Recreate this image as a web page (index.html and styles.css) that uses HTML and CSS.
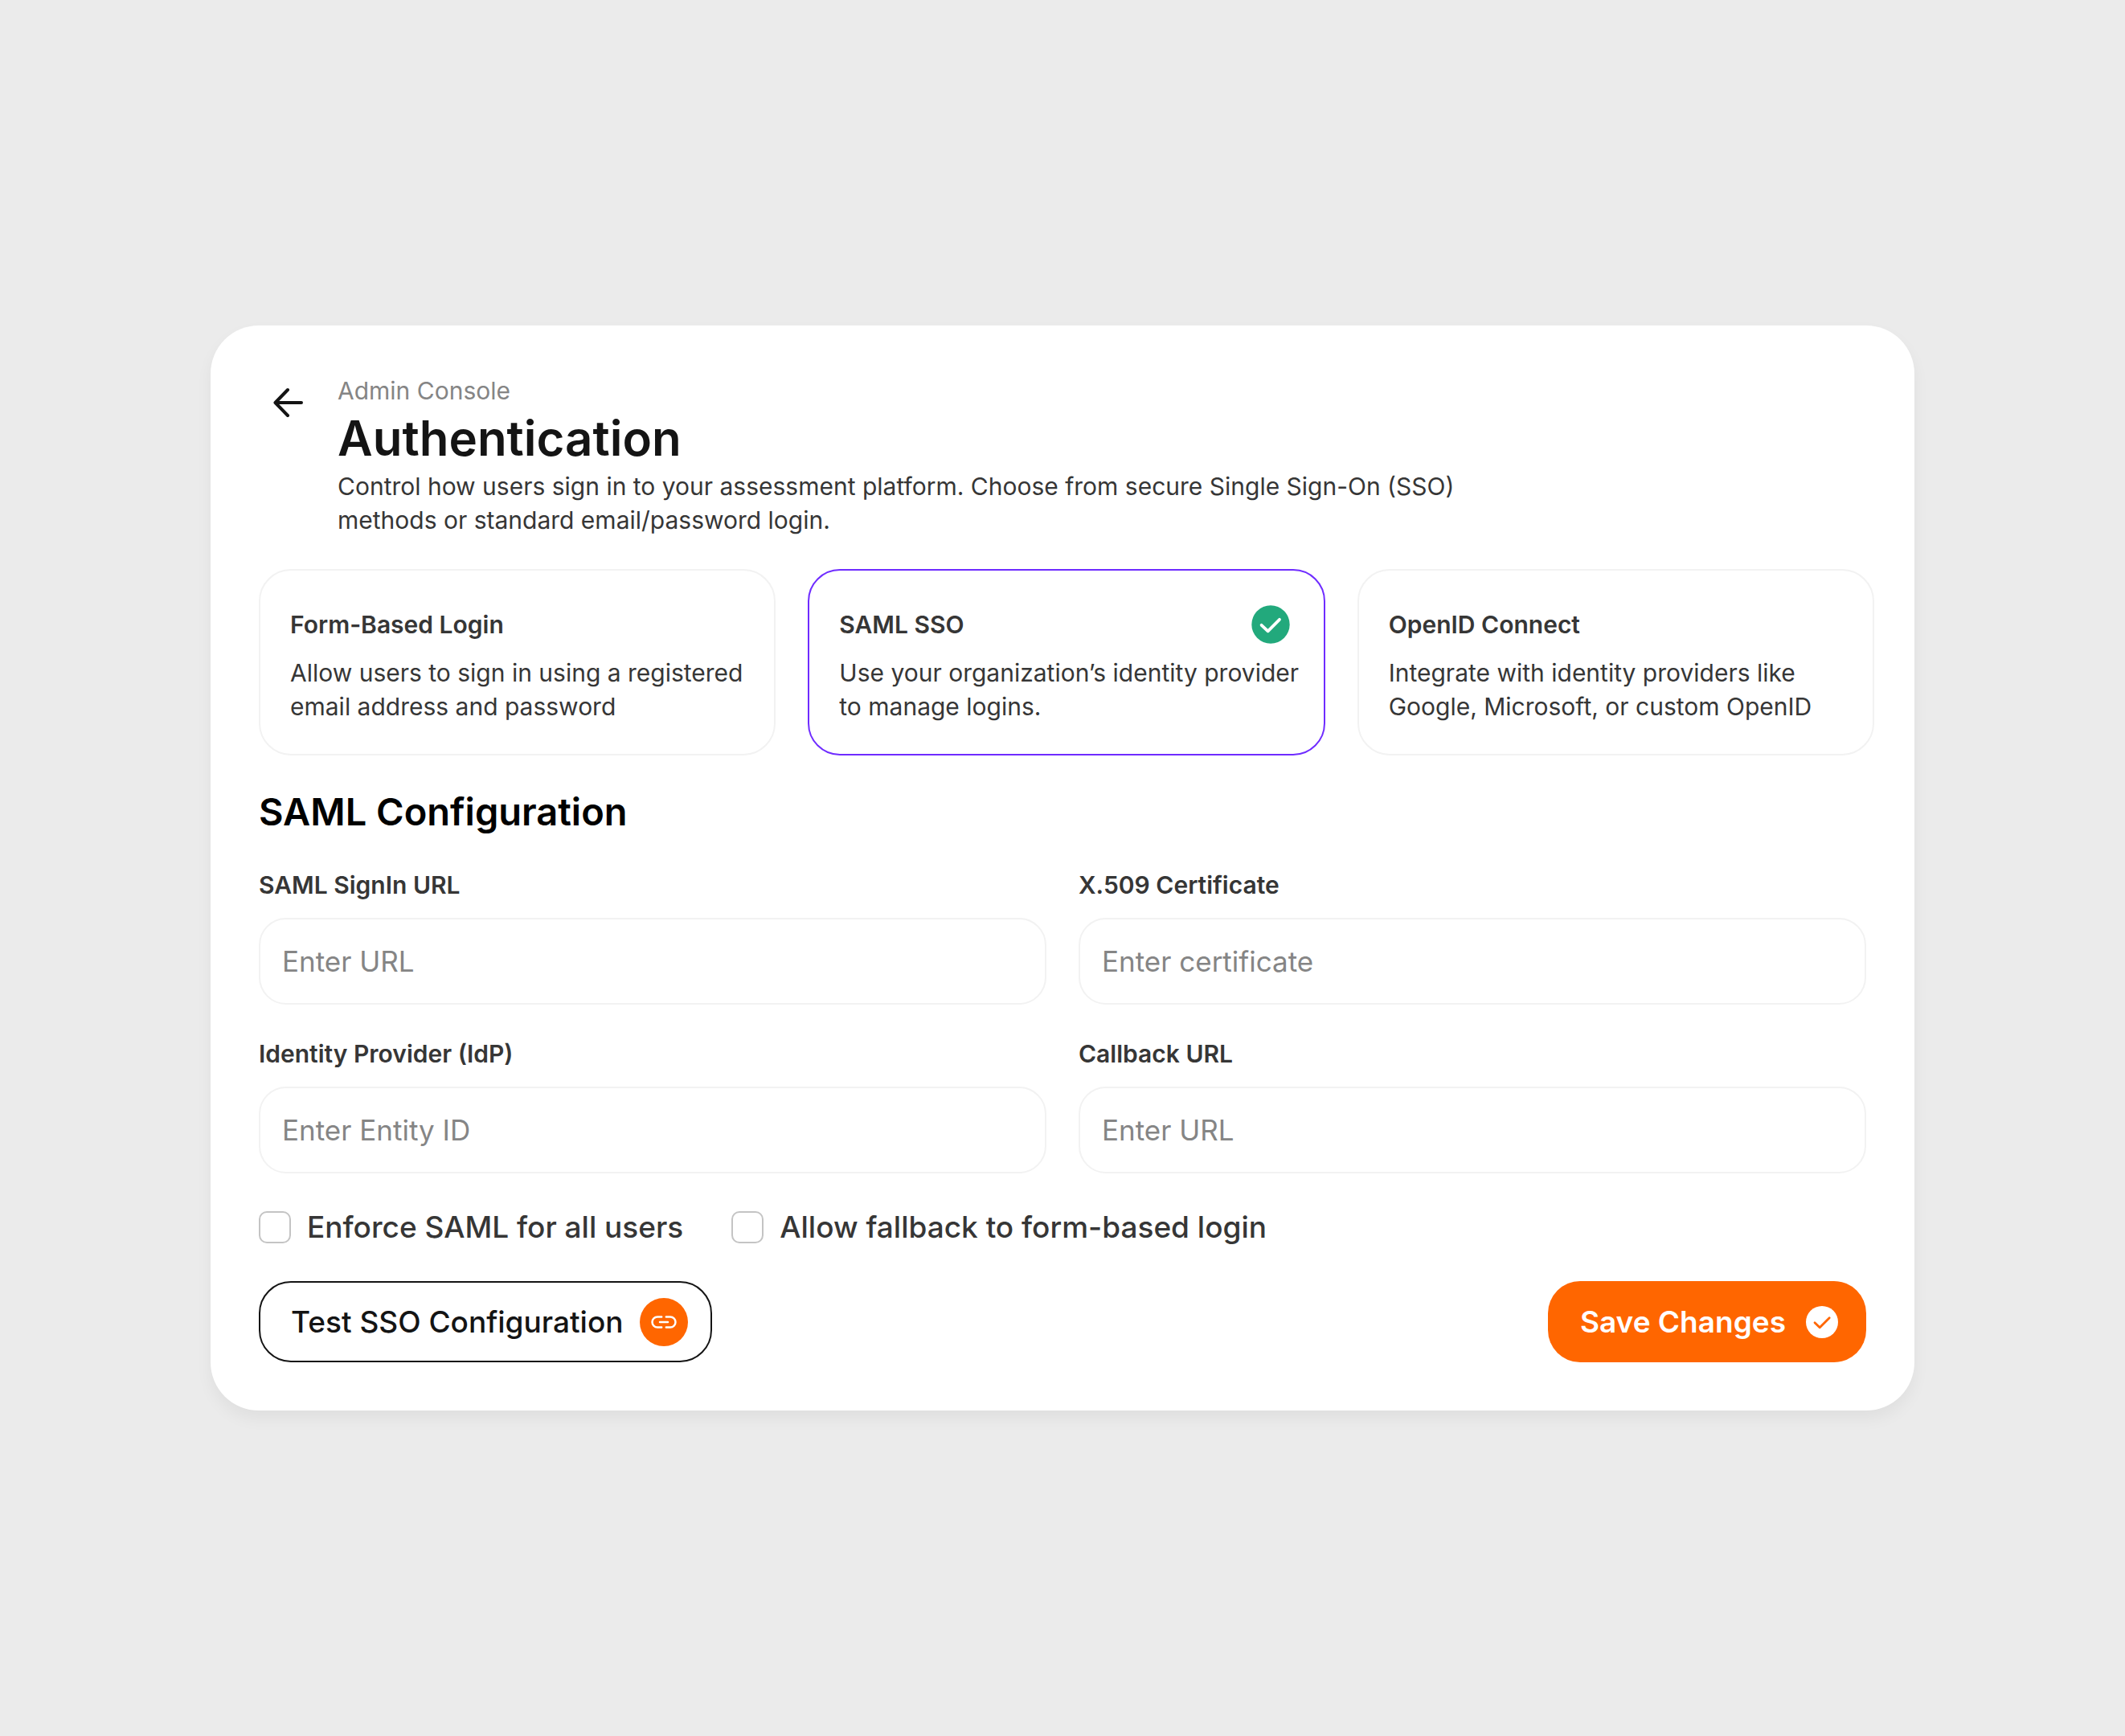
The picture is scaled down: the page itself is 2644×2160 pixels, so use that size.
FILE: index.html
```
<!DOCTYPE html>
<html lang="en">
<head>
    <meta charset="UTF-8">
    <meta name="viewport" content="width=device-width, initial-scale=1.0">
    <title>Authentication</title>
    <link rel="stylesheet" href="styles.css">
</head>
<body>
    <main class="panel">
        <header class="page-header">
            <button type="button" class="back-btn" aria-label="Back">
                <svg width="48" height="48" viewBox="0 0 48 48" fill="none" stroke="#141414" stroke-width="4" stroke-linecap="round" stroke-linejoin="round">
                    <path d="M40 24H8M23 8L7.500 24L23 40"/>
                </svg>
            </button>
            <div class="header-text">
                <p class="breadcrumb">Admin Console</p>
                <h1>Authentication</h1>
                <p class="intro">Control how users sign in to your assessment platform. Choose from secure Single Sign-On (SSO) methods or standard email/password login.</p>
            </div>
        </header>

        <!-- Sign in methods -->
        <section class="methods">
            <button type="button" class="method">
                <span class="method-title">Form-Based Login</span>
                <span class="method-text">Allow users to sign in using a registered email address and password</span>
            </button>
            <button type="button" class="method selected" aria-pressed="true">
                <span class="method-title">SAML SSO
                    <svg width="58" height="58" viewBox="0 0 58 58" fill="none">
                        <circle cx="29" cy="29" r="23.700" fill="#22A97C"/>
                        <path d="M17.600 29.800L25.600 37.300L40 22.800" stroke="#fff" stroke-width="3.800" stroke-linecap="round" stroke-linejoin="round"/>
                    </svg>
                </span>
                <span class="method-text">Use your organization’s identity provider to manage logins.</span>
            </button>
            <button type="button" class="method">
                <span class="method-title">OpenID Connect</span>
                <span class="method-text">Integrate with identity providers like Google, Microsoft, or custom OpenID</span>
            </button>
        </section>

        <form class="config">
            <h2>SAML Configuration</h2>
            <div class="fields">
                <div class="field">
                    <label for="signin-url">SAML SignIn URL</label>
                    <input type="text" id="signin-url" placeholder="Enter URL">
                </div>
                <div class="field">
                    <label for="certificate">X.509 Certificate</label>
                    <input type="text" id="certificate" placeholder="Enter certificate">
                </div>
                <div class="field">
                    <label for="idp">Identity Provider (IdP)</label>
                    <input type="text" id="idp" placeholder="Enter Entity ID">
                </div>
                <div class="field">
                    <label for="callback">Callback URL</label>
                    <input type="text" id="callback" placeholder="Enter URL">
                </div>
            </div>

            <div class="options">
                <label class="option"><input type="checkbox" name="enforce">Enforce SAML for all users</label>
                <label class="option"><input type="checkbox" name="fallback">Allow fallback to form-based login</label>
            </div>

            <div class="actions">
                <button type="button" class="btn test-btn">
                    Test SSO Configuration
                    <svg width="60" height="60" viewBox="0 0 60 60" fill="none">
                        <circle cx="30" cy="30" r="30" fill="#FF6600"/>
                        <path d="M27.200 23.500H22A6.500 6.500 0 0 0 22 36.500H27.200M32.800 23.500H38A6.500 6.500 0 0 1 38 36.500H32.800M25 30H35" stroke="#fff" stroke-width="2.500" stroke-linecap="round"/>
                    </svg>
                </button>
                <button type="submit" class="btn save-btn">
                    Save Changes
                    <svg width="50" height="50" viewBox="0 0 50 50" fill="none">
                        <circle cx="25" cy="25" r="20" fill="#fff"/>
                        <path d="M16 25.700L22.200 31.700L34.200 19.700" stroke="#FF6600" stroke-width="2.800" stroke-linecap="round" stroke-linejoin="round"/>
                    </svg>
                </button>
            </div>
        </form>
    </main>
</body>
</html>
```
FILE: styles.css
```
* {
    box-sizing: border-box;
}

body {
    margin: 0;
    min-height: 100vh;
    display: flex;
    align-items: center;
    justify-content: center;
    background-color: #ebebeb;
    font-family: Inter, "Liberation Sans", sans-serif;
    font-size: 30px;
    line-height: 42px;
    color: #363636;
}

h1, h2, p {
    margin: 0;
}

button, input {
    font-family: inherit;
}

button {
    cursor: pointer;
}

.panel {
    width: 100%;
    max-width: 2120px;
    padding: 60px;
    border-radius: 60px;
    background-color: #ffffff;
    box-shadow: 0 10px 20px rgba(0, 0, 0, 0.05);
}

/* Header */
.page-header {
    display: flex;
    align-items: flex-start;
    gap: 24px;
    margin-bottom: 40px;
}

.back-btn {
    display: flex;
    align-items: center;
    justify-content: center;
    width: 74px;
    height: 72px;
    padding: 0;
    border: none;
    background: none;
}

.header-text {
    max-width: 1400px;
}

.breadcrumb {
    color: #858585;
}

h1 {
    font-size: 60px;
    line-height: 77px;
    font-weight: 600;
    color: #141414;
}

/* Sign in methods */
.methods {
    display: grid;
    grid-template-columns: repeat(3, 1fr);
    gap: 40px;
    margin-right: -10px;
    margin-bottom: 40px;
}

.method {
    display: flex;
    flex-direction: column;
    gap: 10px;
    padding: 38px 27px 38px 37px;
    border: 2px solid #f2f2f2;
    border-radius: 40px;
    background: none;
    font-size: 30px;
    line-height: 42px;
    text-align: left;
    color: #363636;
}

.method.selected {
    border-color: #6f2cff;
}

.method-title {
    display: flex;
    align-items: center;
    justify-content: space-between;
    width: 100%;
    height: 58px;
    padding-right: 10px;
    font-weight: 600;
}

/* SAML form */
h2 {
    margin-bottom: 40px;
    font-size: 47px;
    line-height: 60px;
    font-weight: 600;
    color: #000000;
}

.fields {
    display: grid;
    grid-template-columns: 1fr 1fr;
    gap: 40px;
}

.field {
    display: flex;
    flex-direction: column;
    gap: 20px;
}

.field label {
    font-weight: 600;
}

.field input {
    height: 108px;
    padding: 0 27px;
    border: 2px solid #f2f2f2;
    border-radius: 34px;
    background: none;
    font-size: 35px;
    color: #363636;
}

.field input::placeholder {
    color: #858585;
    opacity: 1;
}

.options {
    display: flex;
    gap: 60px;
    margin: 40px 0;
}

.option {
    display: flex;
    align-items: center;
    gap: 20px;
    font-size: 37px;
    line-height: 54px;
    font-weight: 500;
}

.option input {
    appearance: none;
    width: 40px;
    height: 40px;
    margin: 0;
    border: 2px solid #c4c4c4;
    border-radius: 10px;
}

.option input:checked {
    border-color: #ff6600;
    background-color: #ff6600;
}

.actions {
    display: flex;
    justify-content: space-between;
}

.btn {
    display: flex;
    align-items: center;
    gap: 20px;
    height: 101px;
    padding: 0 30px 0 40px;
    border: none;
    border-radius: 40px;
    font-size: 37px;
    font-weight: 500;
}

.test-btn {
    padding: 0 28px 0 38px;
    border: 2px solid #141414;
    background: none;
    color: #141414;
}

.save-btn {
    background-color: #ff6600;
    color: #ffffff;
    font-weight: 600;
}
```
